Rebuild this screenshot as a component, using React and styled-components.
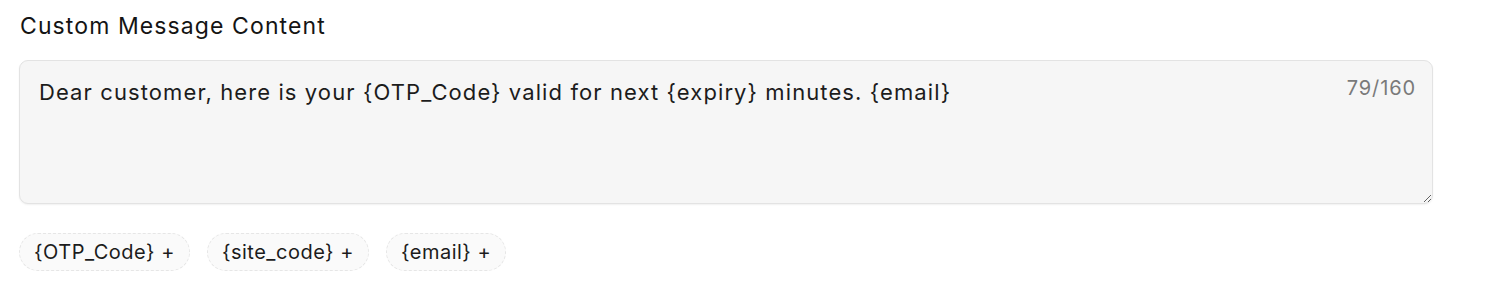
import { useState } from "react";
import styled, { createGlobalStyle } from "styled-components";

const GlobalStyle = createGlobalStyle`
  body {
    margin: 0;
    background: #ffffff;
    font-family: Inter, "Noto Sans", sans-serif;
    color: #111111;
  }
`;

const MAX = 160;
const TOKENS = ["{OTP_Code}", "{site_code}", "{email}"];

const Section = styled.section`
  padding: 12px 55px 0 19px;
`;

const Label = styled.div`
  font-size: 23px;
  line-height: 28px;
  letter-spacing: 1.1px;
  color: #141414;
  margin-left: 1px;
  margin-bottom: 20px;
`;

const Field = styled.div`
  position: relative;
`;

const TextArea = styled.textarea`
  display: block;
  box-sizing: border-box;
  width: 100%;
  height: 144px;
  padding: 17px 90px 16px 19px;
  border: 1px solid #e3e3e3;
  border-radius: 9px;
  background: #f6f6f6;
  font-family: inherit;
  font-size: 22px;
  line-height: 28px;
  letter-spacing: 1.1px;
  color: #1c1c1c;
  resize: vertical;
  outline: none;
  box-shadow: 0 1px 2px rgba(0, 0, 0, 0.06);
`;

const Counter = styled.span`
  position: absolute;
  top: 16px;
  right: 17px;
  font-size: 20px;
  letter-spacing: 0.9px;
  color: #7a7a7a;
`;

const Chips = styled.div`
  display: flex;
  gap: 17px;
  margin-top: 29px;
`;

const Chip = styled.button`
  font-family: inherit;
  font-size: 20px;
  letter-spacing: 0.5px;
  color: #1c1c1c;
  height: 38px;
  padding: 0 14px;
  border: 1px dashed #e6e6e6;
  border-radius: 19px;
  background: #fafafa;
  cursor: pointer;
`;

export default function App() {
  const [text, setText] = useState(
    "Dear customer, here is your {OTP_Code} valid for next {expiry} minutes. {email}"
  );
  return (
    <>
      <GlobalStyle />
      <Section>
        <Label>Custom Message Content</Label>
        <Field>
          <TextArea
            value={text}
            maxLength={MAX}
            onChange={(e) => setText(e.target.value)}
          />
          <Counter>
            {text.length}/{MAX}
          </Counter>
        </Field>
        <Chips>
          {TOKENS.map((t) => (
            <Chip key={t} onClick={() => setText((v) => (v + " " + t).slice(0, MAX))}>
              {t} +
            </Chip>
          ))}
        </Chips>
      </Section>
    </>
  );
}
